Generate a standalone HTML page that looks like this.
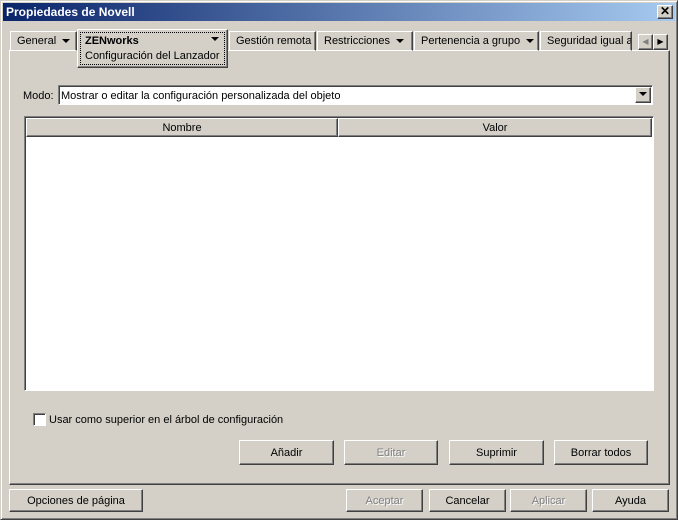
<!DOCTYPE html><html><head><meta charset="utf-8"><style>
*{box-sizing:border-box;margin:0;padding:0}
body{width:678px;height:520px;background:#d4d0c8;font-family:"Liberation Sans",sans-serif;font-size:11px;color:#000;position:relative;overflow:hidden}
.a{position:absolute}
.win{left:0;top:0;width:678px;height:520px;border:1px solid;border-color:#d4d0c8 #404040 #404040 #d4d0c8;box-shadow:inset 1px 1px #fff,inset -1px -1px #808080}
.title{left:3px;top:3px;width:672px;height:18px;background:linear-gradient(90deg,#0a246a,#a6caf0);color:#fff;font-weight:bold;font-size:12px;padding:2px 3px}
.btn{position:absolute;background:#d4d0c8;border:1px solid;border-color:#fff #404040 #404040 #fff;box-shadow:inset -1px -1px #808080;text-align:center}
.dis{color:#808080;text-shadow:1px 1px #fff}
.tab{position:absolute;top:31px;height:20px;border:1px solid;border-color:#fff #404040 transparent #fff;box-shadow:inset -1px 0 #808080;padding:3px 6px;white-space:nowrap;overflow:hidden}
.tri{display:inline-block;width:0;height:0;border-left:4px solid transparent;border-right:4px solid transparent;border-top:4px solid #000;vertical-align:middle;margin-left:6px}
.sunk{border:1px solid;border-color:#808080 #fff #fff #808080;box-shadow:inset 1px 1px #404040}
</style></head><body>
<div class="a win"></div>
<div class="a title">Propiedades de Novell</div>
<div class="btn" style="left:657px;top:5px;width:16px;height:14px;line-height:11px;font-weight:bold;font-size:12px">✕</div>
<div class="a" style="left:9px;top:50px;width:661px;height:435px;border:1px solid;border-color:#fff #404040 #404040 #fff;box-shadow:inset -1px -1px #808080"></div>
<div class="tab" style="left:10px;width:67px">General<span class="tri"></span></div>
<div class="tab" style="left:229px;width:87px">Gestión remota</div>
<div class="tab" style="left:317px;width:96px">Restricciones<span class="tri"></span></div>
<div class="tab" style="left:414px;width:125px">Pertenencia a grupo<span class="tri"></span></div>
<div class="tab" style="left:540px;width:92px">Seguridad igual a</div>
<div class="btn" style="left:638px;top:34px;width:15px;height:16px;line-height:13px;font-size:8px;color:#808080">◀</div>
<div class="btn" style="left:653px;top:34px;width:15px;height:16px;line-height:13px;font-size:8px">▶</div>
<div class="a" style="left:77px;top:29px;width:151px;height:39px;background:#d4d0c8;border:1px solid;border-color:#fff #404040 #404040 #fff;box-shadow:inset -1px -1px #808080"></div>
<div class="a" style="left:80px;top:32px;width:145px;height:33px;border:1px dotted #000"></div>
<div class="a" style="left:85px;top:35px;font-weight:bold">ZENworks</div>
<div class="a" style="left:205px;top:33px"><span class="tri"></span></div>
<div class="a" style="left:85px;top:50px">Configuración del Lanzador</div>
<div class="a" style="left:23px;top:90px">Modo:</div>
<div class="a sunk" style="left:58px;top:85px;width:595px;height:20px;background:#fff;padding:4px 2px">Mostrar o editar la configuración personalizada del objeto</div>
<div class="btn" style="left:635px;top:87px;width:16px;height:16px;line-height:13px"><span class="tri" style="margin:0"></span></div>
<div class="a sunk" style="left:24px;top:116px;width:630px;height:275px;background:#fff"></div>
<div class="btn" style="left:26px;top:118px;width:312px;height:19px;line-height:18px">Nombre</div>
<div class="btn" style="left:338px;top:118px;width:314px;height:19px;line-height:18px">Valor</div>
<div class="a sunk" style="left:33px;top:413px;width:13px;height:13px;background:#fff"></div>
<div class="a" style="left:49px;top:414px">Usar como superior en el árbol de configuración</div>
<div class="btn" style="left:239px;top:440px;width:95px;height:25px;line-height:24px">Añadir</div>
<div class="btn dis" style="left:344px;top:440px;width:94px;height:25px;line-height:24px">Editar</div>
<div class="btn" style="left:449px;top:440px;width:95px;height:25px;line-height:24px">Suprimir</div>
<div class="btn" style="left:554px;top:440px;width:94px;height:25px;line-height:24px">Borrar todos</div>
<div class="btn" style="left:9px;top:489px;width:134px;height:23px;line-height:22px">Opciones de página</div>
<div class="btn dis" style="left:346px;top:489px;width:77px;height:23px;line-height:22px">Aceptar</div>
<div class="btn" style="left:429px;top:489px;width:77px;height:23px;line-height:22px">Cancelar</div>
<div class="btn dis" style="left:510px;top:489px;width:77px;height:23px;line-height:22px">Aplicar</div>
<div class="btn" style="left:592px;top:489px;width:77px;height:23px;line-height:22px">Ayuda</div>
</body></html>
